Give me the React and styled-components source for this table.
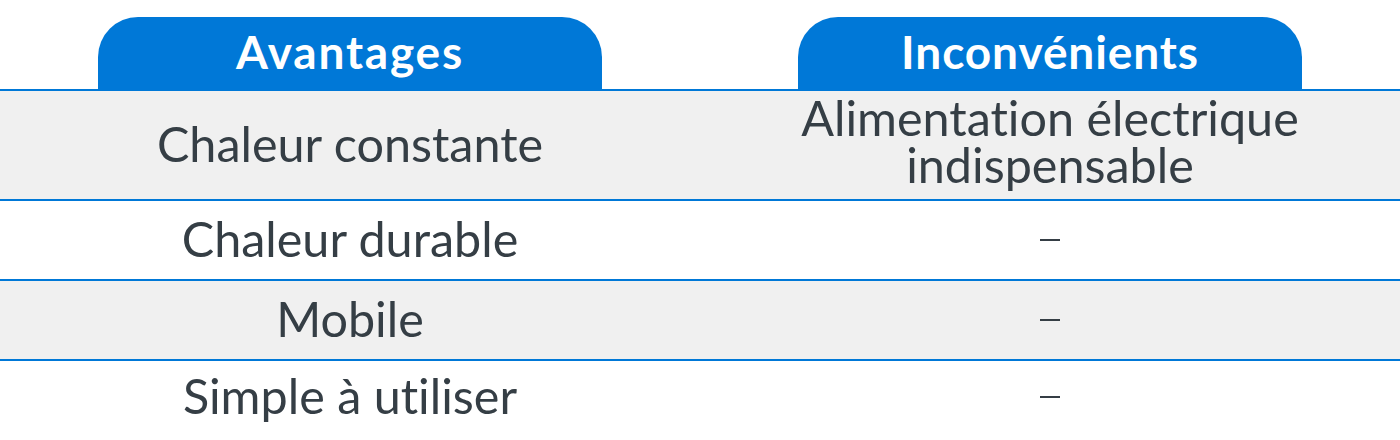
import React from "react";
import styled, { createGlobalStyle } from "styled-components";

const Global = createGlobalStyle`
  html, body { margin: 0; padding: 0; background: #ffffff; }
  body {
    font-family: Lato, "Open Sans", sans-serif;
    font-variant-ligatures: none;
    font-feature-settings: "liga" 0, "clig" 0;
  }
`;

const BLUE = "#0078d7";
const INK = "#353e45";

const Table = styled.div`
  width: 1400px;
  display: flex;
  flex-direction: column;
`;

const HeaderRow = styled.div`
  display: grid;
  grid-template-columns: 1fr 1fr;
  padding-top: 17px;
`;

const HeaderCell = styled.div`
  display: flex;
  justify-content: center;
`;

const Tab = styled.div`
  width: 504px;
  height: 72px;
  background: ${BLUE};
  border-radius: 40px 40px 0 0;
  color: #ffffff;
  font-weight: 700;
  font-size: 46px;
  line-height: 1;
  letter-spacing: ${(p) => p.$spacing}px;
  display: flex;
  align-items: center;
  justify-content: center;
  padding-bottom: 3px;
  box-sizing: border-box;
`;

const Row = styled.div`
  display: grid;
  grid-template-columns: 1fr 1fr;
  border-top: 2px solid ${BLUE};
  background: ${(p) => (p.$shaded ? "#f0f0f0" : "#ffffff")};
  height: ${(p) => p.$h}px;
`;

const Cell = styled.div`
  display: flex;
  align-items: center;
  justify-content: center;
  text-align: center;
  color: ${INK};
  font-size: 48.5px;
  line-height: 47px;
  padding-bottom: ${(p) => (p.$multi ? 9 : 3)}px;
  box-sizing: border-box;
`;

const Dash = styled.span`
  display: block;
  width: 20px;
  height: 2px;
  background: ${INK};
  margin-top: 3px;
`;

const rows = [
  { a: "Chaleur constante", b: ["Alimentation électrique", "indispensable"], h: 108 },
  { a: "Chaleur durable", h: 78 },
  { a: "Mobile", h: 78 },
  { a: "Simple à utiliser", h: 72 },
];

export default function App() {
  return (
    <>
      <Global />
      <Table>
        <HeaderRow>
          <HeaderCell>
            <Tab $spacing={1.8}>Avantages</Tab>
          </HeaderCell>
          <HeaderCell>
            <Tab $spacing={0.9}>Inconvénients</Tab>
          </HeaderCell>
        </HeaderRow>
        {rows.map((r, i) => (
          <Row key={i} $shaded={i % 2 === 0} $h={r.h}>
            <Cell>{r.a}</Cell>
            <Cell $multi={!!r.b}>
              {r.b ? (
                <span>
                  {r.b[0]}
                  <br />
                  {r.b[1]}
                </span>
              ) : (
                <Dash />
              )}
            </Cell>
          </Row>
        ))}
      </Table>
    </>
  );
}
